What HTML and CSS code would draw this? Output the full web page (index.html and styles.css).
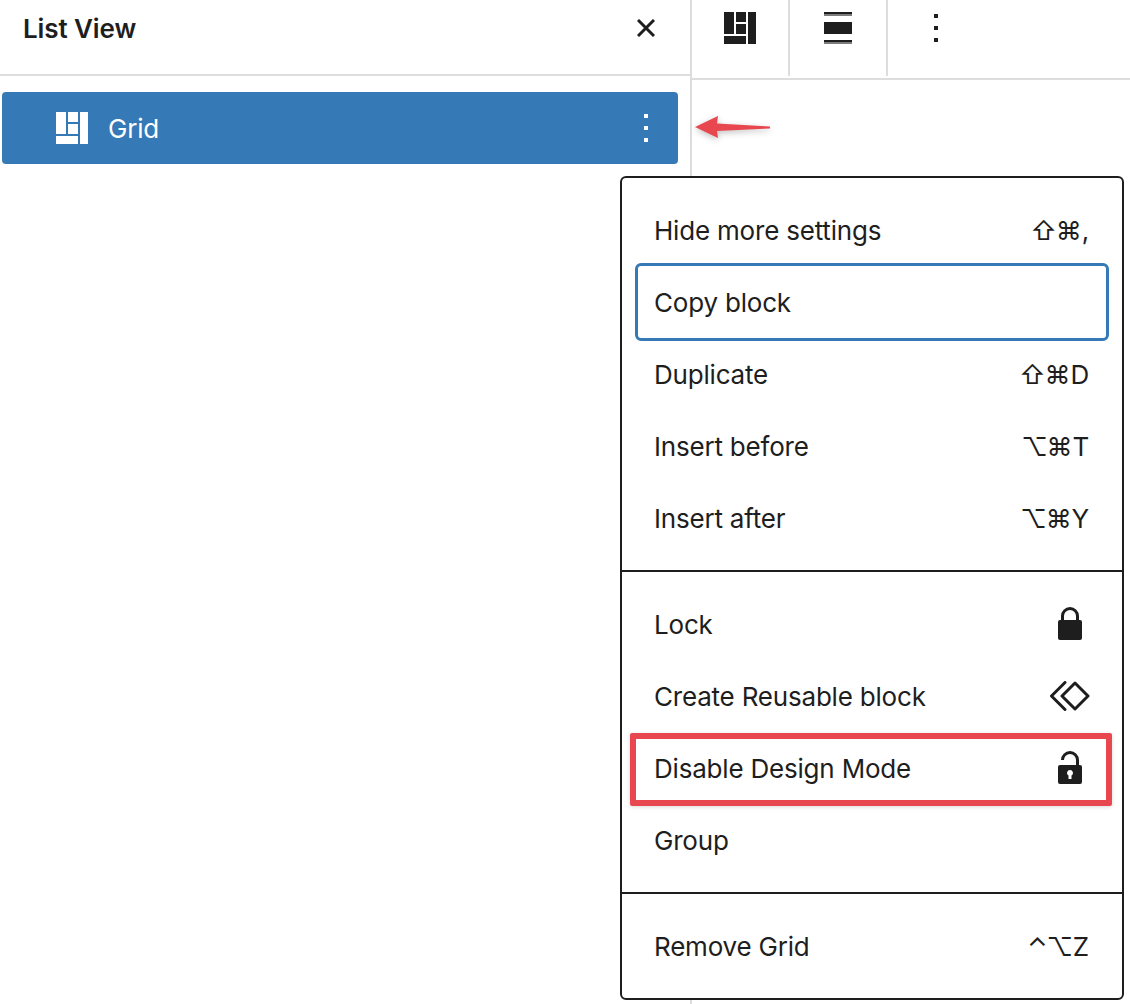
FILE: index.html
```html
<!DOCTYPE html>
<html lang="en">
<head>
  <meta charset="UTF-8">
  <meta name="viewport" content="width=device-width, initial-scale=1.0">
  <title>List View</title>
  <link rel="stylesheet" href="styles.css">
</head>
<body>
  <div class="page">
    <aside class="list-panel">
      <header class="list-header">
        <h2 class="list-title">List View</h2>
        <svg class="close-icon" viewBox="0 0 18 18"><path d="M1 1l16 16M17 1L1 17"/></svg>
      </header>
      <div class="list-row">
        <svg class="grid-icon" viewBox="0 0 32 32"><path d="M0 0h10v22H0zM12 0h10v10H12zM12 12h10v10H12zM24 0h8v32h-8zM0 24h22v8H0z"/></svg>
        <span class="list-row-label">Grid</span>
        <span class="dots dots-row"><i></i><i></i><i></i></span>
      </div>
    </aside>

    <main class="canvas">
      <div class="toolbar">
        <div class="tool">
          <svg class="grid-icon" viewBox="0 0 32 32"><path d="M0 0h10v22H0zM12 0h10v10H12zM12 12h10v10H12zM24 0h8v32h-8zM0 24h22v8H0z"/></svg>
        </div>
        <div class="tool">
          <svg class="align-icon" viewBox="0 0 28 32"><path class="align-soft" d="M0 2h28v2H0zM0 30h28v2H0z"/><path d="M0 0h28v2H0zM0 10h28v12H0zM0 28h28v2H0z"/></svg>
        </div>
        <div class="tool tool-last">
          <span class="dots"><i></i><i></i><i></i></span>
        </div>
      </div>
    </main>
  </div>

  <div class="menu">
    <div class="menu-group">
      <div class="menu-item"><span>Hide more settings</span><span class="shortcut"><span class="keys">⇧⌘</span>,</span></div>
      <div class="menu-item menu-item-focus"><span>Copy block</span></div>
      <div class="menu-item"><span>Duplicate</span><span class="shortcut"><span class="keys">⇧⌘</span>D</span></div>
      <div class="menu-item"><span>Insert before</span><span class="shortcut"><span class="keys">⌥⌘</span>T</span></div>
      <div class="menu-item"><span>Insert after</span><span class="shortcut"><span class="keys">⌥⌘</span>Y</span></div>
    </div>
    <div class="menu-group">
      <div class="menu-item">
        <span>Lock</span>
        <svg class="menu-icon lock-icon" viewBox="0 0 24 34"><path class="shackle" d="M4.500 14V9a7.500 7.500 0 0 1 15 0v5"/><rect y="13" width="24" height="20" rx="2"/></svg>
      </div>
      <div class="menu-item">
        <span>Create Reusable block</span>
        <svg class="menu-icon reuse-icon" viewBox="0 0 40 30"><path d="M15 1.500L1.500 15 15 28.500M25 2L38 15 25 28 12 15z"/></svg>
      </div>
      <div class="menu-item">
        <span>Disable Design Mode</span>
        <svg class="menu-icon unlock-icon" viewBox="0 0 24 34"><path class="shackle" d="M4.500 9a7.500 7.500 0 0 1 15 0v7"/><path fill-rule="evenodd" d="M2 14h20a2 2 0 0 1 2 2v15a2 2 0 0 1-2 2H2a2 2 0 0 1-2-2V16a2 2 0 0 1 2-2zM12 19a3 3 0 0 0-1.500 5.600V28h3v-3.400A3 3 0 0 0 12 19z"/></svg>
      </div>
      <div class="menu-item"><span>Group</span></div>
    </div>
    <div class="menu-group">
      <div class="menu-item"><span>Remove Grid</span><span class="shortcut"><span class="keys">⌃⌥</span>Z</span></div>
    </div>
  </div>

  <!-- annotations on top of the screenshot -->
  <svg class="note-arrow" viewBox="0 0 80 28"><path d="M1 13L24 2l-1 7.500 53 3v2L23 17l1 7z"/></svg>
  <div class="note-box"></div>
</body>
</html>
```

FILE: styles.css
```css
html, body {
  height: 100%;
}

body {
  margin: 0;
  background: #fff;
  color: #1e1e1e;
  font-family: 'Inter', 'Liberation Sans', sans-serif;
  font-size: 26px;
  letter-spacing: -0.2px;
  overflow: hidden;
}

.page {
  display: flex;
  height: 1004px;
}

.list-panel {
  width: 690px;
  flex: none;
  border-right: 2px solid #ddd;
}

.list-header {
  height: 74px;
  padding: 0 35px 0 23px;
  display: flex;
  align-items: center;
  justify-content: space-between;
  border-bottom: 2px solid #ddd;
}

.list-title {
  margin: 0 0 18px;
  font-size: 26px;
  font-weight: 600;
  letter-spacing: -0.1px;
}

.close-icon {
  width: 18px;
  height: 18px;
  margin-bottom: 18px;
  fill: none;
  stroke: #1e1e1e;
  stroke-width: 3;
}

.list-row {
  margin: 16px 12px 0 2px;
  height: 72px;
  padding: 0 30px 0 54px;
  display: flex;
  align-items: center;
  background: #357ab7;
  border-radius: 4px;
  color: #fff;
}

.list-row .grid-icon {
  fill: #fff;
}

.list-row-label {
  margin-left: 20px;
  flex: 1;
}

.grid-icon {
  width: 32px;
  height: 32px;
  fill: #1e1e1e;
}

.dots {
  display: flex;
  flex-direction: column;
  gap: 8px;
}

.dots i {
  display: block;
  width: 4px;
  height: 4px;
  background: #1e1e1e;
}

.dots-row i {
  background: #fff;
}

.canvas {
  flex: 1;
}

.toolbar {
  display: flex;
  height: 78px;
  border-bottom: 2px solid #ddd;
}

.tool {
  width: 96px;
  height: 64px;
  padding-top: 12px;
  display: flex;
  justify-content: center;
  border-right: 2px solid #ddd;
}

.tool-last {
  border-right: none;
}

.tool .dots {
  padding-top: 2px;
}

.align-icon {
  width: 28px;
  height: 32px;
  fill: #1e1e1e;
}

.align-soft {
  fill: #7c7c7c;
}

.menu {
  position: absolute;
  left: 620px;
  top: 176px;
  width: 504px;
  height: 824px;
  box-sizing: border-box;
  background: #fff;
  border: 2px solid #1e1e1e;
  border-radius: 6px;
}

.menu-group {
  padding: 16px 14px;
}

.menu-group + .menu-group {
  border-top: 2px solid #1e1e1e;
}

.menu-item {
  height: 72px;
  padding: 0 19px 0 18px;
  display: flex;
  align-items: center;
  justify-content: space-between;
}

.menu-item-focus {
  height: 78px;
  margin: -3px -1px;
  padding-left: 16px;
  box-sizing: border-box;
  border: 3px solid #357ab7;
  border-radius: 6px;
}

.keys {
  letter-spacing: -1.2px;
  margin-right: 1px;
}

.menu-icon {
  fill: #1e1e1e;
  flex: none;
}

.shackle {
  fill: none;
  stroke: #1e1e1e;
  stroke-width: 3;
}

.lock-icon, .unlock-icon {
  width: 24px;
  height: 34px;
  margin-right: 7px;
}

.reuse-icon {
  width: 40px;
  height: 30px;
  margin-right: -1px;
  fill: none;
  stroke: #1e1e1e;
  stroke-width: 3;
  stroke-linejoin: round;
  stroke-linecap: round;
}

.note-arrow {
  position: absolute;
  left: 694px;
  top: 114px;
  width: 80px;
  height: 28px;
  fill: #e8474f;
  filter: drop-shadow(0 2px 3px rgba(0, 0, 0, 0.25));
}

.note-box {
  position: absolute;
  left: 630px;
  top: 733px;
  width: 482px;
  height: 73px;
  box-sizing: border-box;
  border: 6px solid #e8474f;
  border-radius: 2px;
  box-shadow: 0 1px 4px rgba(0, 0, 0, 0.15);
}
```
